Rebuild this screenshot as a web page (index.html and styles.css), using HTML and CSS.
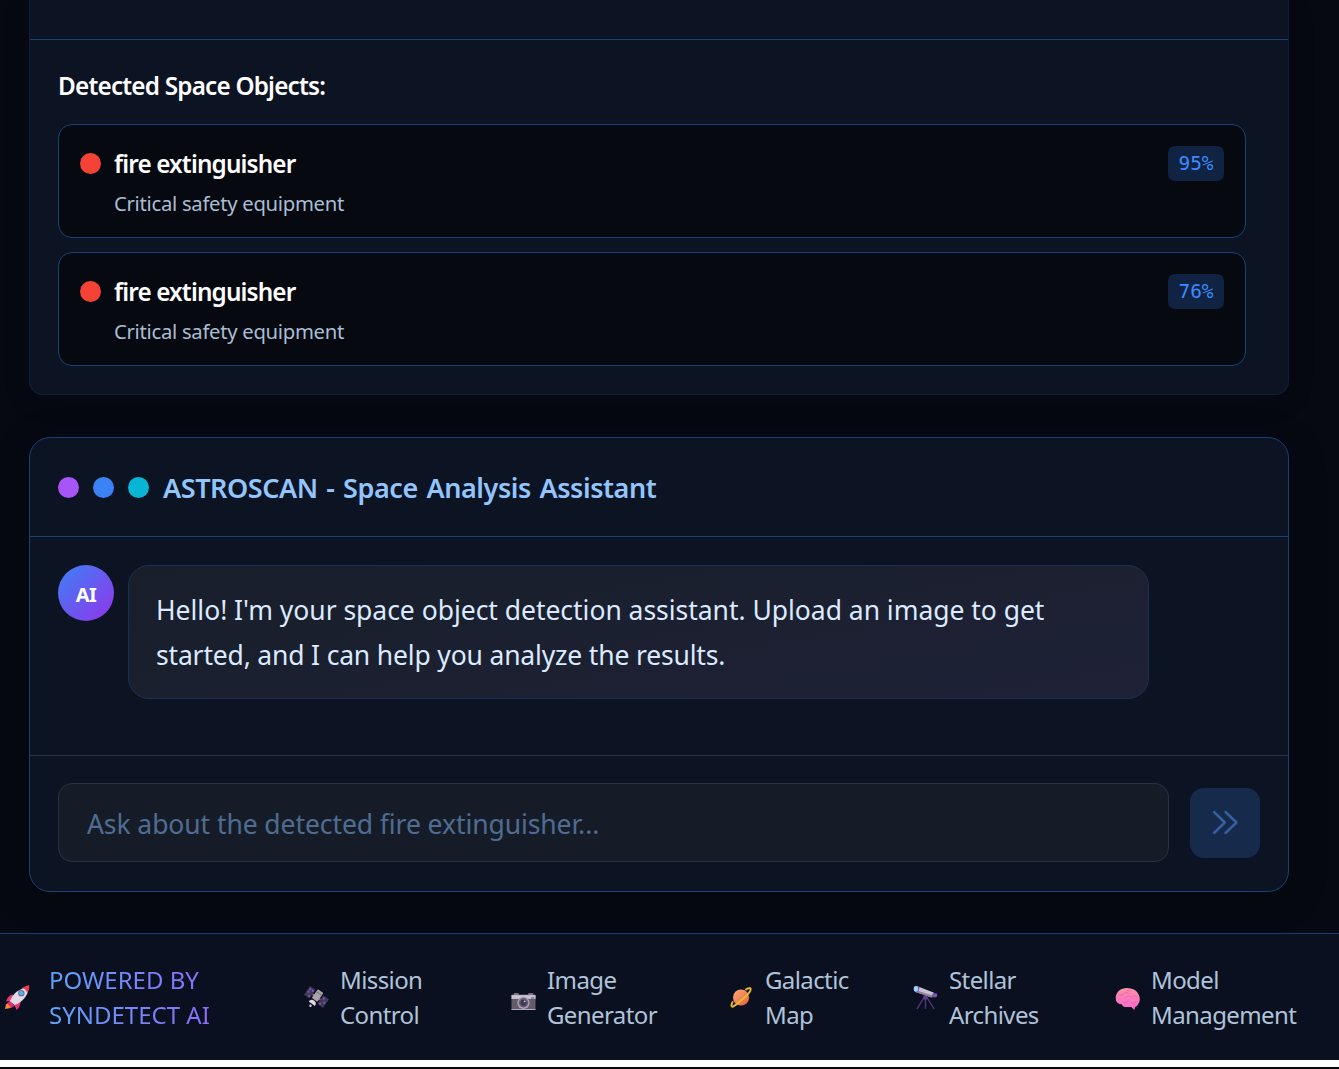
FILE: index.html
```html
<!DOCTYPE html>
<html lang="en">
<head>
<meta charset="utf-8">
<title>AstroScan</title>
<link rel="stylesheet" href="styles.css">
</head>
<body>
<main class="content">
  <section class="results">
    <div class="results-head"></div>
    <h2 class="results-title">Detected Space Objects:</h2>
    <ul class="objects">
      <li class="object">
        <i class="dot dot-red"></i>
        <div class="object-info"><h3 class="object-name">fire extinguisher</h3><p class="object-note">Critical safety equipment</p></div>
        <span class="score">95%</span>
      </li>
      <li class="object">
        <i class="dot dot-red"></i>
        <div class="object-info"><h3 class="object-name">fire extinguisher</h3><p class="object-note">Critical safety equipment</p></div>
        <span class="score">76%</span>
      </li>
    </ul>
  </section>

  <section class="chat">
    <header class="chat-head">
      <i class="dot dot-purple"></i><i class="dot dot-blue"></i><i class="dot dot-cyan"></i>
      <h2 class="chat-title">ASTROSCAN - Space Analysis Assistant</h2>
    </header>
    <div class="messages">
      <div class="avatar">AI</div>
      <p class="bubble">Hello! I'm your space object detection assistant. Upload an image to get<br><span class="bubble-end">started, and I can help you analyze the results.</span></p>
    </div>
    <form class="composer">
      <input class="ask" type="text" placeholder="Ask about the detected fire extinguisher...">
      <button class="send" type="button" aria-label="Send">
        <svg width="28" height="28" viewBox="0 0 28 28" fill="none" stroke="currentColor" stroke-width="2.5" stroke-linecap="round" stroke-linejoin="round"><path d="M3 3L13.8 13.5L3 24M14.5 3L25.5 13.5L14.5 24"/></svg>
      </button>
    </form>
  </section>
</main>

<footer class="footer">
  <div class="foot-item brand">
    <svg class="emoji" viewBox="0 0 26 26">
      <path d="M6 18L1 20L0 25L6 24Z" fill="#f58a35"/>
      <path d="M8 10Q3 11 1 17L8 17ZM16 17L16 19Q15 24 12 26L9 19Z" fill="#e9346f"/>
      <path d="M5 17Q9 5 25 1Q24 15 10 21Z" fill="#e2d8e6"/>
      <path d="M18 3Q21 1 25 0Q26 4 23 8Q22 4 18 3Z" fill="#f13a50"/>
      <path d="M5 17L10 21L7 24L2 19Z" fill="#e12e75"/>
      <circle cx="17" cy="8.5" r="3.3" fill="#66708c"/><circle cx="17" cy="8.5" r="2.2" fill="#58b0fb"/>
    </svg>
    <span class="brand-text">POWERED BY<br>SYNDETECT AI</span>
  </div>
  <a class="foot-item mission">
    <svg class="emoji" viewBox="0 0 26 26">
      <g transform="rotate(35 13 12.5)"><path d="M1 7H8V18H1ZM18 7H25V18H18Z" fill="#40394f"/><path d="M8 12.5H18" stroke="#777082" stroke-width="2"/><g fill="#7550c8"><circle cx="3" cy="9.5" r="1.2"/><circle cx="6" cy="9.5" r="1.2"/><circle cx="3" cy="12.8" r="1.2"/><circle cx="6" cy="16" r="1.2"/><circle cx="20" cy="9.5" r="1.2"/><circle cx="23" cy="12.8" r="1.2"/><circle cx="20" cy="16" r="1.2"/></g><rect x="9.5" y="5" width="7" height="11" rx="1" fill="#aaa3ac"/><path d="M9.5 8H16.5" stroke="#777080"/><path d="M9 21Q9 17 13 17T17 21Z" fill="#e2dae5"/><circle cx="13" cy="23.5" r="1.3" fill="#cfc5d6"/></g>
    </svg>
    <span>Mission<br>Control</span>
  </a>
  <a class="foot-item generator">
    <svg class="emoji" viewBox="0 0 26 26">
      <path d="M3 9.5H8M18 9.5H23" stroke="#9c93a5" stroke-width="2"/><rect x=".5" y="10" width="25" height="16" rx="1" fill="#635d69"/><path d="M.5 10.5H25.5V14.5H.5Z" fill="#cdc0d7"/><path d="M.5 25.5H25.5" stroke="#bca9ce"/>
      <circle cx="13" cy="18.5" r="6.4" fill="#a7a0b0"/><circle cx="13" cy="18.5" r="4.9" fill="#665a77"/><circle cx="13" cy="18.5" r="3.2" fill="#413851"/><circle cx="14.3" cy="17" r="1" fill="#c5b4df"/><rect x="21" y="12.5" width="3" height="2" fill="#8a8195"/>
    </svg>
    <span>Image<br>Generator</span>
  </a>
  <a class="foot-item galactic">
    <svg class="emoji" viewBox="0 0 26 26">
      <defs><linearGradient id="planet" x2="1" y2="1"><stop stop-color="#ffab73"/><stop offset="1" stop-color="#e45d42"/></linearGradient></defs>
      <circle cx="11.5" cy="13" r="8.4" fill="url(#planet)"/><path d="M16 5Q21 2 21.5 4Q22 7 14 14T3 22.5Q0 23 3 17" fill="none" stroke="#e9bb28" stroke-width="2"/>
    </svg>
    <span>Galactic<br>Map</span>
  </a>
  <a class="foot-item stellar">
    <svg class="emoji" viewBox="0 0 26 26">
      <path d="M12 12L4 25M13 12V25M14 12L22 25" stroke="#51337d" stroke-width="1.4"/><rect x="11" y="11" width="4" height="4" fill="#61418c"/>
      <path d="M4 1L22 8L20 13L2 7Z" fill="#c9c1cf"/><path d="M2 5L20 11L19 13L2 7Z" fill="#8c829c"/><path d="M21 8L25 9Q26 12 23 13L19 12Z" fill="#7854b7"/><path d="M4 1L7 2L5 8L2 7Z" fill="#7651b9"/><ellipse cx="3" cy="4" rx="2.3" ry="3" fill="#9bd5ff"/>
    </svg>
    <span>Stellar<br>Archives</span>
  </a>
  <a class="foot-item model">
    <svg class="emoji" viewBox="0 0 26 26">
      <defs><linearGradient id="brain" x2="0" y2="1"><stop stop-color="#ff93a5"/><stop offset="1" stop-color="#fb65d2"/></linearGradient></defs>
      <path d="M3 19Q0 17 1 11Q3 5 8 4Q12 2 17 4Q23 5 25 11Q27 16 24 20Q23 22 21 23L20 26L17 23H12Q8 23 7 20Q5 20 3 19Z" fill="url(#brain)"/>
      <path d="M4 10Q7 12 9 9Q12 6 15 9M10 14Q14 9 17 13Q21 9 23 13M8 18Q13 19 14 15M17 18Q20 20 23 17M12 5Q13 7 17 6" fill="none" stroke="#e85bb2" stroke-width=".8"/>
    </svg>
    <span>Model<br>Management</span>
  </a>
</footer>
<div class="page-edge"></div>
</body>
</html>
```
FILE: styles.css
```css
* { box-sizing: border-box; }
body {
  margin: 0;
  height: 1069px;
  overflow: hidden;
  background: #060911;
  color: #fff;
  font-family: "Noto Sans", "Open Sans", sans-serif;
}
h2, h3, p, ul { margin: 0; padding: 0; }
.content { height: 933px; padding: 0 50px 0 29px; }
.results {
  height: 395px;
  padding: 0 42px 0 28px;
  border: 1px solid #10203a;
  border-top: 0;
  border-radius: 0 0 14px 14px;
  background: #0c1322;
  box-shadow: 0 6px 28px rgba(0, 0, 0, .12);
}
.results-head { height: 40px; margin: 0 -42px 0 -28px; border-bottom: 1px solid #174178; }
.results-title {
  height: 84px;
  padding-top: 28px;
  font-size: 24.3px;
  font-weight: 600;
  line-height: 36px;
  letter-spacing: -.8px;
}
.objects { display: grid; gap: 14px; list-style: none; }
.object {
  display: flex;
  height: 114px;
  padding: 21px;
  border: 1px solid #174178;
  border-radius: 14px;
  background: #060910;
}
.dot { flex: none; width: 21px; height: 21px; border-radius: 50%; }
.dot-red { margin: 7px 13px 0 0; background: #f44336; }
.dot-purple { background: #a855f7; }
.dot-blue { background: #3b82f6; }
.dot-cyan { background: #06b6d4; }
.object-info { flex: 1; }
.object-name { font-size: 24.3px; font-weight: 600; line-height: 36px; letter-spacing: -.85px; }
.object-note { margin-top: 6px; color: #a9bdd4; font-size: 20.3px; line-height: 30px; letter-spacing: -.3px; }
.score {
  width: 56px;
  height: 35px;
  border-radius: 7px;
  background: #102342;
  color: #3b8aff;
  font: 19.4px/35px "DejaVu Sans Mono", monospace;
  text-align: center;
}
.chat {
  height: 455px;
  margin-top: 42px;
  border: 1px solid #174178;
  border-radius: 21px;
  background: #0c1322;
  box-shadow: 0 8px 40px rgba(0, 0, 0, .18);
}
.chat-head {
  display: flex;
  align-items: center;
  gap: 14px;
  height: 99px;
  padding: 0 28px;
  border-bottom: 1px solid #174178;
}
.chat-title { padding-top: 2px; color: #93c5fd; font-size: 27px; font-weight: 600; line-height: 42px; letter-spacing: -.43px; word-spacing: 2px; white-space: nowrap; }
.messages { display: flex; gap: 14px; height: 218px; padding: 28px; }
.avatar {
  width: 56px;
  height: 56px;
  border-radius: 50%;
  background: linear-gradient(135deg, #3b82f6, #9333ea);
  font-size: 20px;
  font-weight: 700;
  line-height: 59px;
  letter-spacing: -.5px;
  text-align: center;
}
.bubble {
  width: 1021px;
  height: 134px;
  padding: 22px 27px;
  border: 1px solid #1d2f50;
  border-radius: 21px;
  background: linear-gradient(170deg, #181e2a, #1f2237);
  color: #dbeafe;
  font-size: 26.5px;
  line-height: 45px;
  letter-spacing: -.03px;
  white-space: nowrap;
}
.bubble-end { letter-spacing: -.17px; }
.composer {
  display: flex;
  align-items: center;
  gap: 21px;
  height: 136px;
  padding: 0 28px 2px;
  border-top: 1px solid #293449;
}
.ask {
  flex: 1;
  height: 79px;
  padding: 2px 28px 0;
  border: 1px solid #283144;
  border-radius: 14px;
  background: #161c27;
  color: #dbeafe;
  font: 26.5px "Noto Sans", "Open Sans", sans-serif;
  letter-spacing: -.08px;
}
.ask::placeholder { color: #4f6c92; opacity: 1; }
.send {
  display: grid;
  place-items: center;
  width: 70px;
  height: 70px;
  padding: 0;
  border: 0;
  border-radius: 14px;
  background: #162a4b;
  color: #355f9e;
}
.footer {
  display: grid;
  grid-template-columns: 299px 207px 219px 183px 202px 1fr;
  height: 127px;
  padding: 28px 0 0 5px;
  border-top: 1px solid #174178;
  background: #0a101f;
  color: #afc3d9;
  font-size: 24px;
  line-height: 35px;
  letter-spacing: -.6px;
  white-space: nowrap;
}
.foot-item { display: flex; gap: 11px; }
.brand { gap: 19px; letter-spacing: 0; }
.emoji { flex: none; width: 25px; height: 25px; margin-top: 23px; }
.galactic { gap: 10px; }
.brand-text { align-self: flex-start; background: linear-gradient(90deg, #60a5fa, #8b6cf8); background-clip: text; color: transparent; }
.page-edge { height: 9px; border-top: 7px solid #fff; background: #05080f; }
```
